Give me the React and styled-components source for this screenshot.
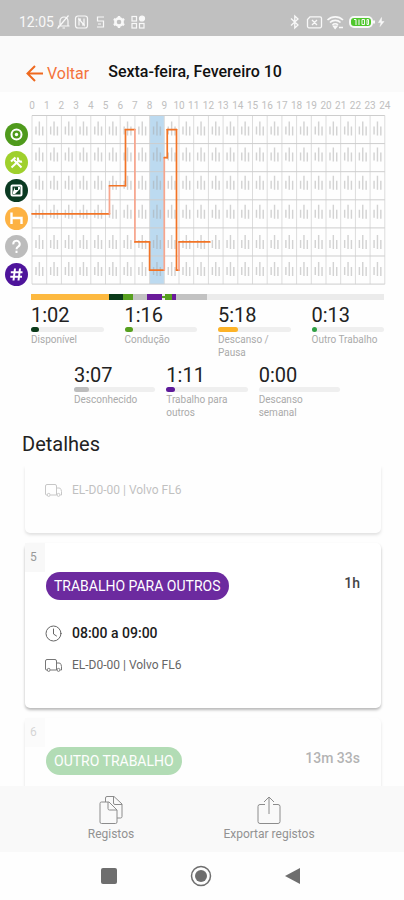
import styled, { createGlobalStyle } from "styled-components"

const GlobalStyle = createGlobalStyle`
    * {
        box-sizing: border-box;
    }
    body {
        margin: 0;
        background: #fefefe;
        font-family: Roboto, "Liberation Sans", sans-serif;
        color: #222;
    }
    h1, h2, p, ul {
        margin: 0;
        padding: 0;
    }
    button {
        border: none;
        padding: 0;
        background: none;
        font-family: inherit;
        cursor: pointer;
    }
    svg {
        display: block;
    }
`
const Page = styled.div`
    display: flex;
    flex-direction: column;
    height: 100vh;
    overflow: hidden;
`
const StatusBar = styled.div`
    display: flex;
    justify-content: space-between;
    align-items: center;
    flex-shrink: 0;
    height: 36px;
    padding: 8px 19px 0;
    background: #c0c0c0;
    color: #f8f8f8;
    font-size: 14px;
`
const StatusGroup = styled.div`
    display: flex;
    align-items: center;
    gap: 2px;
`
const Header = styled.header`
    display: flex;
    align-items: center;
    gap: 19px;
    flex-shrink: 0;
    height: 56px;
    padding: 18px 26px 0;
    background: #fafafa;
`
const BackLink = styled.a`
    display: flex;
    align-items: center;
    gap: 4px;
    color: #f4733c;
    font-size: 16px;
    text-decoration: none;
`
const Title = styled.h1`
    font-size: 16px;
    font-weight: 500;
    line-height: 18px;
    padding-bottom: 3px;
    color: #111;
`
const ChartRow = styled.section`
    display: flex;
    flex-shrink: 0;
    padding: 6px 10px 0 5px;
`
const ActivityList = styled.ul`
    display: flex;
    flex-direction: column;
    gap: 5px;
    width: 23px;
    padding-top: 25px;
    list-style: none;
`
const ActivityIcon = styled.li`
    display: flex;
    align-items: center;
    justify-content: center;
    width: 23px;
    height: 23px;
    border-radius: 50%;
    background: ${(props) => props.$color};
`
const Chart = styled.svg`
    flex: 1;
    min-width: 0;
    font-size: 10px;
`
const Timeline = styled.div`
    display: flex;
    align-items: center;
    flex-shrink: 0;
    height: 6px;
    margin: 8px 20px 0 31px;
    background: #ebebeb;
`
const Segment = styled.span`
    width: ${(props) => props.$size}%;
    height: ${(props) => (props.$thin ? "2px" : "6px")};
    background: ${(props) => props.$color};
`
const StatGrid = styled.div`
    display: grid;
    grid-template-columns: repeat(${(props) => props.$columns}, 1fr);
    column-gap: ${(props) => props.$gap};
    flex-shrink: 0;
    height: 60px;
    margin: ${(props) => props.$margin};
`
const StatValue = styled.p`
    font-size: 20px;
    line-height: 24px;
    padding-top: 3px;
    color: #222;
`
const StatTrack = styled.div`
    height: 5px;
    border-radius: 3px;
    background: #efefef;
`
const StatFill = styled.div`
    height: 5px;
    border-radius: 3px;
    background: ${(props) => props.$color};
`
const StatLabel = styled.p`
    padding-top: 1px;
    font-size: 10px;
    line-height: 13px;
    color: #aaa;
`
const SectionTitle = styled.h2`
    flex-shrink: 0;
    padding: 0 22px;
    font-size: 20px;
    font-weight: 400;
    line-height: 24px;
    margin-top: 12px;
    color: #222;
`
const CardList = styled.main`
    display: flex;
    flex-direction: column;
    flex: 1;
    gap: 10px;
    min-height: 0;
    margin-top: 10px;
    padding: 0 23px 0 25px;
    overflow: hidden;
`
const Card = styled.article`
    flex-shrink: 0;
    padding-bottom: 27px;
    border-radius: ${(props) => (props.$cut ? "0 0 5px 5px" : "5px")};
    background: #fff;
    box-shadow: 0 2px 3px rgba(0, 0, 0, 0.28);
    opacity: ${(props) => (props.$faded ? 0.4 : 1)};
`
const CardNumber = styled.p`
    width: 20px;
    height: 29px;
    padding-left: 5px;
    background: #f8f8f8;
    font-size: 12px;
    line-height: 28px;
    color: #999;
`
const CardTop = styled.div`
    display: flex;
    justify-content: space-between;
    padding: 0 21px;
    margin-bottom: 17px;
`
const Tag = styled.span`
    height: 28px;
    padding: 0 8px;
    border-radius: 14px;
    background: ${(props) => props.$color};
    color: #fff;
    font-size: 14px;
    line-height: 29px;
`
const Duration = styled.span`
    font-size: 14px;
    font-weight: 500;
    line-height: 22px;
    color: #444;
`
const CardLine = styled.div`
    display: flex;
    align-items: center;
    gap: 10px;
    height: 32px;
    padding-left: 20px;
    font-size: ${(props) => (props.$strong ? "14px" : "12px")};
    font-weight: ${(props) => (props.$strong ? 500 : 400)};
    color: ${(props) => (props.$strong ? "#1c1c1c" : "#666")};
`
const CutSpace = styled.div`
    height: 8px;
`
const BottomBar = styled.footer`
    display: flex;
    flex-shrink: 0;
    height: 66px;
    padding: 0 56px 0 32px;
    background: #f9f9f9;
`
const BottomButton = styled.button`
    display: flex;
    flex: 1;
    flex-direction: column;
    align-items: center;
    justify-content: center;
    gap: 2px;
    font-size: 12px;
    line-height: 16px;
    color: #929292;
`
const SystemNav = styled.nav`
    display: flex;
    justify-content: center;
    align-items: center;
    flex-shrink: 0;
    height: 48px;
    padding-right: 2px;
`
const SystemButton = styled.button`
    display: flex;
    justify-content: center;
    width: 92px;
`

const activities = [
    { name: "Condução", color: "#4f9a1c" },
    { name: "Outro trabalho", color: "#9fd02c" },
    { name: "Disponível", color: "#0b3a22" },
    { name: "Descanso", color: "#fdb243" },
    { name: "Desconhecido", color: "#bcbcbc" },
    { name: "Trabalho para outros", color: "#4e149b" },
]

const segments = [
    { size: 22, color: "#fdb940" },
    { size: 4, color: "#0b3a1a" },
    { size: 3, color: "#57a01f" },
    { size: 4, color: "#c2c2c2" },
    { size: 4, color: "#6a1b9a" },
    { size: 1, color: "#57a01f", thin: true },
    { size: 2, color: "#57a01f" },
    { size: 1, color: "#6a1b9a" },
    { size: 9, color: "#c2c2c2" },
]

const dailyStats = [
    { value: "1:02", label: "Disponível", fill: 11, color: "#0b3a1a" },
    { value: "1:16", label: "Condução", fill: 12, color: "#57a01f" },
    { value: "5:18", label: "Descanso / Pausa", fill: 28, color: "#fdb327" },
    { value: "0:13", label: "Outro Trabalho", fill: 8, color: "#2ea043" },
]

const otherStats = [
    { value: "3:07", label: "Desconhecido", fill: 19, color: "#bdbdbd" },
    { value: "1:11", label: "Trabalho para outros", fill: 11, color: "#5e1a9a" },
    { value: "0:00", label: "Descanso semanal", fill: 0, color: "#bdbdbd" },
]

// plot area inside the chart svg
const LEFT = 4
const TOP = 17.5
const HOUR = 14.7
const ROW = 28.1
const x = (hour) => LEFT + hour * HOUR
const y = (row) => TOP + (row + 0.5) * ROW

const hours = Array.from({ length: 25 }, (_, i) => i)
const cells = hours.slice(0, 24)
const tickTops = [6, 4, 4, 5, 7, 6]

// [start hour, end hour, row]
const periods = [
    [0, 5.27, 3],
    [5.27, 6.36, 2],
    [6.36, 7, 0],
    [7, 8, 4],
    [8, 9, 5],
    [9, 9.2, 1],
    [9.2, 9.83, 0],
    [9.83, 10, 5],
    [10, 12.1, 4],
]
const paleJoins = [1, 3, 5, 8]

function ticks(row) {
    const top = TOP + row * ROW + tickTops[row]
    return cells
        .map((h) => `M${x(h + 0.27)} ${top + 5}V${top + 13}M${x(h + 0.5)} ${top}V${top + 14}M${x(h + 0.73)} ${top + 5}V${top + 14}`)
        .join("")
}

function ActivityChart() {
    return (
        <Chart viewBox="0 0 366 188" role="img" aria-label="Atividade por hora">
            {hours.map((h) => (
                <text key={h} x={x(h)} y="11" textAnchor="middle" fill="#c0c0c0">{h}</text>
            ))}
            <rect x={x(8)} y={TOP} width={HOUR} height={ROW * 6} fill="#bcdaf0" />
            <g stroke="#dcdcdc" fill="none">
                {hours.map((h) => <path key={h} d={`M${x(h)} ${TOP}V${TOP + ROW * 6}`} />)}
            </g>
            <g stroke="#cdcdcd" fill="none">
                {[0, 1, 2, 3, 4, 5, 6].map((r) => <path key={r} d={`M${LEFT} ${TOP + r * ROW}H${x(24)}`} />)}
            </g>
            <g stroke="#a8a8a8" strokeOpacity="0.5" strokeWidth="1.4" fill="none">
                {activities.map((a, r) => <path key={a.name} d={ticks(r)} />)}
            </g>
            {periods.map(([start, end, row], i) => (
                <g key={start} fill="none" strokeLinecap="round">
                    {i > 0 && (
                        <path
                            d={`M${x(start)} ${y(periods[i - 1][2])}V${y(row)}`}
                            stroke={paleJoins.includes(i) ? "#f8a58c" : "#f27426"}
                            strokeWidth="1.7"
                        />
                    )}
                    <path d={`M${x(start)} ${y(row)}H${x(end)}`} stroke="#f27426" strokeWidth="1.7" />
                </g>
            ))}
        </Chart>
    )
}

function ActivityGlyph({ index }) {
    return (
        <svg width="19" height="19" viewBox="0 0 19 19" fill="none" stroke="#fff" strokeWidth="2">
            {index === 0 && (
                <>
                    <circle cx="9.5" cy="9.5" r="5" />
                    <circle cx="9.5" cy="9.5" r="1.7" fill="#fff" stroke="none" />
                </>
            )}
            {index === 1 && (
                <>
                    <path d="M4.5 14.5 12 7.500M14.500 14.500 7 7" />
                    <path d="M4 8.500 8.500 4.500M11 4.500a3.200 3.200 0 0 0 4 4" strokeWidth="2.200" />
                </>
            )}
            {index === 2 && (
                <>
                    <rect x="4.5" y="4.5" width="10" height="10" rx="1" />
                    <path d="M8 6H13V8L8 13H6V11Z" fill="#fff" stroke="none" />
                    <path d="M8 6V9H11V6Z" fill="#0b3a22" stroke="none" />
                </>
            )}
            {index === 3 && <path d="M4.5 3.5V15M4.5 9H14.5V15" strokeWidth="2.4" />}
            {index === 4 && (
                <>
                    <path d="M6.3 7.3a3.2 3.2 0 1 1 4.9 2.4c-1.3.8-1.7 1.2-1.7 2.5" />
                    <path d="M9.5 13.7V16" />
                </>
            )}
            {index === 5 && <path d="M8 3.5 6.5 15.5M13 3.5 11.5 15.5M3.8 7.2H15.5M3.3 11.8H15" />}
        </svg>
    )
}

function Stat({ value, label, fill, color }) {
    return (
        <div>
            <StatValue>{value}</StatValue>
            <StatTrack>
                <StatFill $color={color} style={{ width: `${fill}%` }} />
            </StatTrack>
            <StatLabel>{label}</StatLabel>
        </div>
    )
}

function ClockIcon() {
    return (
        <svg width="17" height="17" viewBox="0 0 17 17" fill="none" stroke="#666" strokeLinecap="round">
            <circle cx="8.5" cy="8.5" r="7.5" />
            <path d="M8.5 4V9L11.5 11" />
        </svg>
    )
}

function TruckIcon() {
    return (
        <svg width="17" height="13" viewBox="0 0 17 13" fill="none" stroke="#777">
            <path d="M2 11H1.500a1 1 0 0 1-1-1V2a1.500 1.500 0 0 1 1.500-1.500H10A1.500 1.500 0 0 1 11.500 2V11H5.500M11.500 4H14a2 2 0 0 1 2 1.500l.5 2V11H15.500" />
            <circle cx="3.7" cy="10.900" r="1.5" />
            <circle cx="13.500" cy="10.900" r="1.5" />
        </svg>
    )
}

function VehicleLine() {
    return (
        <CardLine>
            <TruckIcon />
            <span>EL-D0-00 | Volvo FL6</span>
        </CardLine>
    )
}

function StatusIcons() {
    return (
        <svg width="90" height="16" viewBox="0 0 90 16" fill="none" stroke="#f8f8f8" strokeWidth="1.2">
            <path d="M4 11.5V7a4 4 0 0 1 8 0V11.5M2 12H13.5M6.5 14H9M1.5 14.5 12.5 1.5" />
            <rect x="19.5" y="2" width="12" height="12" rx="2.5" />
            <path d="M23 11.5V5L28 11V4.5M22 5.2H25M26 11H29" />
            <path d="M48 3H41.5V7H47.5V13H41M42 10H45" />
            <circle cx="63" cy="8" r="3.6" strokeWidth="2.6" />
            <path d="M63 2V4M63 12V14M57.8 5 59.5 6M66.5 10 68.2 11M57.8 11 59.5 10M66.5 6 68.2 5" strokeWidth="2.4" />
            <rect x="76" y="2.5" width="4.5" height="4.5" />
            <rect x="83.5" y="2" width="5" height="5" rx="2.5" fill="#f8f8f8" />
            <rect x="76" y="9.5" width="4.5" height="4.5" />
            <rect x="83.5" y="9.5" width="4.5" height="4.5" />
        </svg>
    )
}

function ConnectionIcons() {
    return (
        <svg width="96" height="16" viewBox="0 0 96 16" fill="none" stroke="#f8f8f8" strokeWidth="1.3">
            <path d="M2 4.5 9 11 5.8 14V2L9 5 2 11.5" />
            <path d="M21 2.8H31a1.5 1.5 0 0 1 1.5 1.5v8A1.5 1.5 0 0 1 31 13.8H20a1.5 1.5 0 0 1-1.5-1.5V5.5ZM23 6 28 11M28 6 23 11" />
            <path d="M38.5 6a11 11 0 0 1 15.5 0M41 8.5a7.5 7.5 0 0 1 10.5 0M43.5 11a4 4 0 0 1 5.5 0" strokeWidth="1.7" />
            <path d="M46.2 14.5 44.5 12.2h3.5ZM50 13.5H54" fill="#f8f8f8" />
            <rect x="61" y="3" width="22" height="10" rx="4" fill="#4fc72c" strokeWidth="2" />
            <path d="M65 5.5H67V11M70 5.5V11M73 5.5h2.5v5H73ZM78 5.5h1.5v5H78Z" strokeWidth="1" />
            <path d="M85 6.5V9.5" strokeWidth="2" />
            <path d="M92.5 3.5 89.5 8.5H92L91 12.5 95 7.5H92.5Z" fill="#f8f8f8" strokeWidth="0.5" />
        </svg>
    )
}

export default function App() {
    return (
        <Page>
            <GlobalStyle />
            <StatusBar>
                <StatusGroup>
                    <span>12:05</span>
                    <StatusIcons />
                </StatusGroup>
                <ConnectionIcons />
            </StatusBar>
            <Header>
                <BackLink href="#voltar">
                    <svg width="17" height="17" viewBox="0 0 17 17" fill="none" stroke="#ee691f" strokeWidth="2">
                        <path d="M17 8.5H2M9 1 1.5 8.5 9 16" />
                    </svg>
                    Voltar
                </BackLink>
                <Title>Sexta-feira, Fevereiro 10</Title>
            </Header>

            <ChartRow>
                <ActivityList>
                    {activities.map((activity, i) => (
                        <ActivityIcon key={activity.name} $color={activity.color} aria-label={activity.name}>
                            <ActivityGlyph index={i} />
                        </ActivityIcon>
                    ))}
                </ActivityList>
                <ActivityChart />
            </ChartRow>
            <Timeline>
                {segments.map((segment, i) => (
                    <Segment key={i} $size={segment.size} $color={segment.color} $thin={segment.thin} />
                ))}
            </Timeline>

            <StatGrid $columns={4} $gap="21px" $margin="0 20px 0 31px">
                {dailyStats.map((stat) => <Stat key={stat.label} {...stat} />)}
            </StatGrid>
            <StatGrid $columns={3} $gap="11px" $margin="0 64px 0 74px">
                {otherStats.map((stat) => <Stat key={stat.label} {...stat} />)}
            </StatGrid>

            <SectionTitle>Detalhes</SectionTitle>
            <CardList>
                <Card $cut $faded>
                    <CutSpace />
                    <VehicleLine />
                </Card>
                <Card>
                    <CardNumber>5</CardNumber>
                    <CardTop>
                        <Tag $color="#6c2a9f">TRABALHO PARA OUTROS</Tag>
                        <Duration>1h</Duration>
                    </CardTop>
                    <CardLine $strong>
                        <ClockIcon />
                        <span>08:00 a 09:00</span>
                    </CardLine>
                    <VehicleLine />
                </Card>
                <Card $faded>
                    <CardNumber>6</CardNumber>
                    <CardTop>
                        <Tag $color="#43aa4a">OUTRO TRABALHO</Tag>
                        <Duration>13m 33s</Duration>
                    </CardTop>
                </Card>
            </CardList>

            <BottomBar>
                <BottomButton>
                    <svg width="24" height="28" viewBox="0 0 24 28" fill="none" stroke="#8c8c8c" strokeLinejoin="round">
                        <path d="M6.5 6V2A1.500 1.500 0 0 1 8 .5H15L23 8V20.5A1.500 1.500 0 0 1 21.500 22H18M14.500 .5V7A1.500 1.500 0 0 0 16 8.500H23" />
                        <path d="M10 6H2.500A1.500 1.500 0 0 0 1 7.500V26A1.500 1.500 0 0 0 2.500 27.500H16.500A1.500 1.500 0 0 0 18 26V14ZM9 6V12.500A1.500 1.500 0 0 0 10.500 14H18" />
                    </svg>
                    Registos
                </BottomButton>
                <BottomButton>
                    <svg width="24" height="28" viewBox="0 0 24 28" fill="none" stroke="#8c8c8c" strokeLinejoin="round">
                        <path d="M8 8.5H3a2 2 0 0 0-2 2V25.5a2 2 0 0 0 2 2H21a2 2 0 0 0 2-2V10.5a2 2 0 0 0-2-2H16M12 18V1M7 6 12 1 17 6" />
                    </svg>
                    Exportar registos
                </BottomButton>
            </BottomBar>
            <SystemNav>
                <SystemButton aria-label="Recentes">
                    <svg width="16" height="16"><rect width="16" height="16" rx="2" fill="#6e6e6e" /></svg>
                </SystemButton>
                <SystemButton aria-label="Início">
                    <svg width="22" height="22" viewBox="0 0 22 22">
                        <circle cx="11" cy="11" r="9.5" fill="none" stroke="#6e6e6e" strokeWidth="1.5" />
                        <circle cx="11" cy="11" r="6" fill="#6e6e6e" />
                    </svg>
                </SystemButton>
                <SystemButton aria-label="Anterior">
                    <svg width="16" height="18" viewBox="0 0 16 18"><path d="M0 9 15 1V17Z" fill="#6e6e6e" /></svg>
                </SystemButton>
            </SystemNav>
        </Page>
    )
}
